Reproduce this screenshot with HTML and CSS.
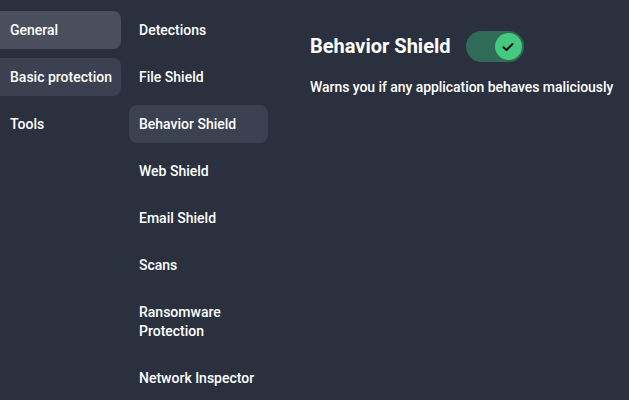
FILE: index.html
```html
<!DOCTYPE html>
<html>
<head>
<meta charset="utf-8">
<link rel="stylesheet" href="styles.css">
</head>
<body>
<div class="app">
  <nav class="nav nav-main">
    <div class="item item-selected">General</div>
    <div class="item item-active">Basic protection</div>
    <div class="item">Tools</div>
  </nav>
  <nav class="nav nav-sub">
    <div class="item">Detections</div>
    <div class="item">File Shield</div>
    <div class="item item-active">Behavior Shield</div>
    <div class="item">Web Shield</div>
    <div class="item">Email Shield</div>
    <div class="item">Scans</div>
    <div class="item item-multi">Ransomware<br>Protection</div>
    <div class="item">Network Inspector</div>
  </nav>
  <main class="content">
    <div class="title-row">
      <h1 class="title">Behavior Shield</h1>
      <div class="toggle">
        <div class="knob">
          <svg width="12" height="10" viewBox="0 0 12 10"><path d="M1.5 5.2 L4.5 8 L10.5 2" fill="none" stroke="#111" stroke-width="2" stroke-linecap="round" stroke-linejoin="round"/></svg>
        </div>
      </div>
    </div>
    <p class="desc">Warns you if any application behaves maliciously</p>
  </main>
</div>
</body>
</html>
```

FILE: styles.css
```css
html, body {
  margin: 0;
  padding: 0;
  background: #2a303e;
  overflow: hidden;
}
body {
  font-family: Roboto, "Noto Sans", sans-serif;
  color: #ffffff;
  width: 629px;
  height: 400px;
}
.app {
  display: flex;
  align-items: flex-start;
}
.nav {
  display: flex;
  flex-direction: column;
  gap: 9px;
  padding-top: 11px;
}
.nav-main {
  margin-left: -10px;
  width: 131px;
}
.nav-sub {
  margin-left: 8px;
  width: 139px;
}
.item {
  height: 38px;
  display: flex;
  align-items: center;
  padding-left: 10px;
  font-size: 14px;
  font-weight: 500;
  line-height: 19px;
  border-radius: 8px;
  box-sizing: border-box;
}
.nav-main .item {
  padding-left: 20px;
}
.item-multi {
  height: 57px;
}
.item-selected {
  background: #4a4f5e;
}
.item-active {
  background: #3b4151;
}
.content {
  margin-left: 42px;
  padding-top: 31px;
}
.title-row {
  display: flex;
  align-items: center;
  gap: 15px;
}
.title {
  margin: 0;
  font-size: 20px;
  font-weight: 700;
  line-height: 31px;
}
.toggle {
  width: 58px;
  height: 31px;
  border-radius: 16px;
  background: #2f6b56;
  display: flex;
  align-items: center;
  justify-content: flex-end;
  padding-right: 2px;
  box-sizing: border-box;
}
.knob {
  width: 27px;
  height: 27px;
  border-radius: 50%;
  background: #44c97f;
  display: flex;
  align-items: center;
  justify-content: center;
}
.desc {
  margin: 16px 0 0;
  font-size: 14px;
  font-weight: 500;
  line-height: 19px;
  letter-spacing: -0.06px;
}
```
